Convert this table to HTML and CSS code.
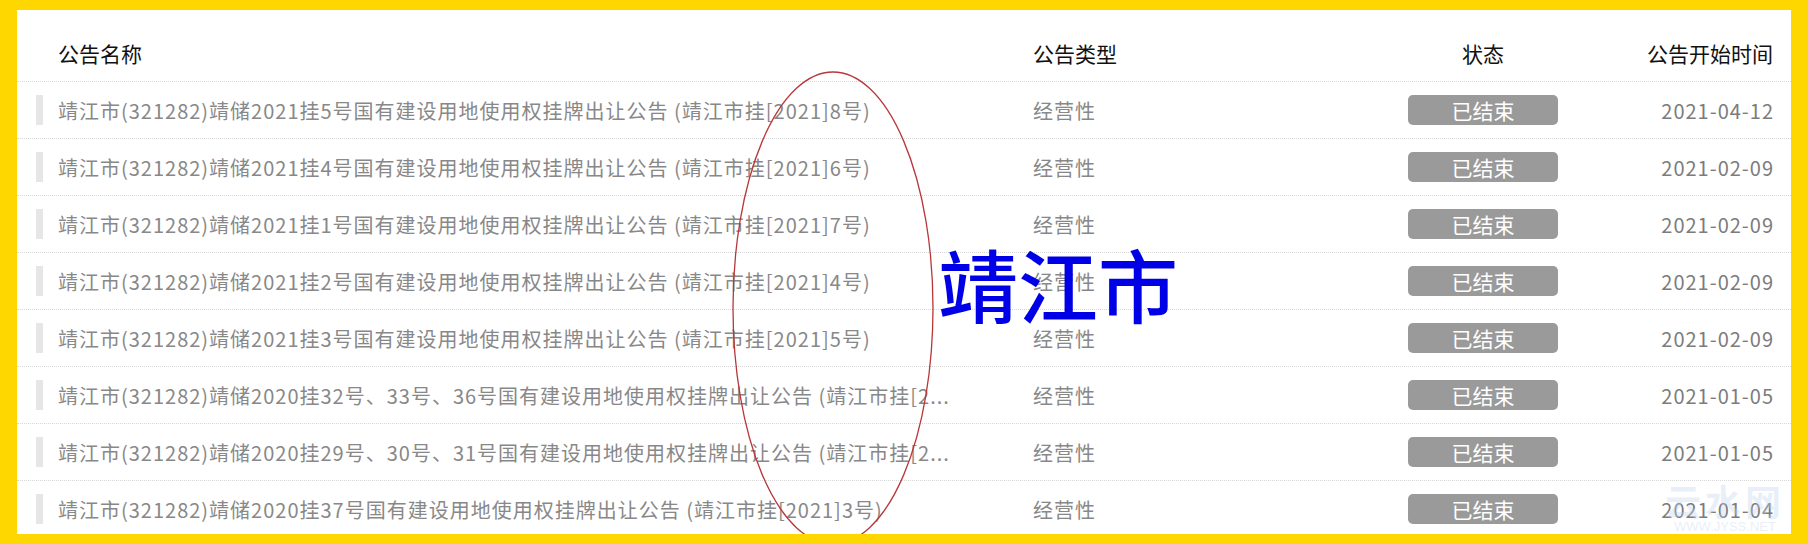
FILE: index.html
```html
<!DOCTYPE html>
<html lang="zh-CN">
<head>
<meta charset="UTF-8">
<meta name="viewport" content="width=device-width, initial-scale=1.0">
<title>靖江市 公告列表</title>
<link rel="stylesheet" href="styles.css">
</head>
<body>
<div class="panel">
  <div class="row head">
    <span></span>
    <span class="name">公告名称</span>
    <span class="type">公告类型</span>
    <span class="status">状态</span>
    <span class="date">公告开始时间</span>
  </div>
  <div class="row">
    <span class="bar"></span>
    <span class="name">靖江市(321282)靖储2021挂5号国有建设用地使用权挂牌出让公告 (靖江市挂[2021]8号)</span>
    <span class="type">经营性</span>
    <span class="status"><span class="badge">已结束</span></span>
    <span class="date">2021-04-12</span>
  </div>
  <div class="row">
    <span class="bar"></span>
    <span class="name">靖江市(321282)靖储2021挂4号国有建设用地使用权挂牌出让公告 (靖江市挂[2021]6号)</span>
    <span class="type">经营性</span>
    <span class="status"><span class="badge">已结束</span></span>
    <span class="date">2021-02-09</span>
  </div>
  <div class="row">
    <span class="bar"></span>
    <span class="name">靖江市(321282)靖储2021挂1号国有建设用地使用权挂牌出让公告 (靖江市挂[2021]7号)</span>
    <span class="type">经营性</span>
    <span class="status"><span class="badge">已结束</span></span>
    <span class="date">2021-02-09</span>
  </div>
  <div class="row">
    <span class="bar"></span>
    <span class="name">靖江市(321282)靖储2021挂2号国有建设用地使用权挂牌出让公告 (靖江市挂[2021]4号)</span>
    <span class="type">经营性</span>
    <span class="status"><span class="badge">已结束</span></span>
    <span class="date">2021-02-09</span>
  </div>
  <div class="row">
    <span class="bar"></span>
    <span class="name">靖江市(321282)靖储2021挂3号国有建设用地使用权挂牌出让公告 (靖江市挂[2021]5号)</span>
    <span class="type">经营性</span>
    <span class="status"><span class="badge">已结束</span></span>
    <span class="date">2021-02-09</span>
  </div>
  <div class="row">
    <span class="bar"></span>
    <span class="name">靖江市(321282)靖储2020挂32号、33号、36号国有建设用地使用权挂牌出让公告 (靖江市挂[2...</span>
    <span class="type">经营性</span>
    <span class="status"><span class="badge">已结束</span></span>
    <span class="date">2021-01-05</span>
  </div>
  <div class="row">
    <span class="bar"></span>
    <span class="name">靖江市(321282)靖储2020挂29号、30号、31号国有建设用地使用权挂牌出让公告 (靖江市挂[2...</span>
    <span class="type">经营性</span>
    <span class="status"><span class="badge">已结束</span></span>
    <span class="date">2021-01-05</span>
  </div>
  <div class="row">
    <span class="bar"></span>
    <span class="name">靖江市(321282)靖储2020挂37号国有建设用地使用权挂牌出让公告 (靖江市挂[2021]3号)</span>
    <span class="type">经营性</span>
    <span class="status"><span class="badge">已结束</span></span>
    <span class="date">2021-01-04</span>
  </div>

  <!-- annotations drawn over the list -->
  <svg class="circle" width="204" height="476" viewBox="0 0 204 476">
    <ellipse cx="102" cy="238" rx="100" ry="236" fill="none" stroke="#b8373a" stroke-width="1.3"/>
  </svg>
  <div class="city">靖江市</div>
  <div class="mark">
    <div class="mark-cn">云水网</div>
    <div class="mark-en">WWW.JYSS.NET</div>
  </div>
</div>
</body>
</html>
```

FILE: styles.css
```css
/* page */
body {
  margin: 0;
  background: #ffd700;
  font-family: "Microsoft YaHei", "Noto Sans CJK SC", sans-serif;
}

.panel {
  position: relative;
  margin: 10px 17px;
  height: 524px;
  background: #fff;
  overflow: hidden;
}

/* list rows */
.row {
  display: grid;
  grid-template-columns: 22px 975px 375px 150px 215px;
  align-items: center;
  padding: 0 18px 0 19px;
  height: 56px;
  border-bottom: 1px dotted #d6d6d6;
  font-size: 20px;
  letter-spacing: 1px;
  color: #888;
}

.bar {
  width: 7px;
  height: 30px;
  background: #e6e6e6;
}

.name {
  white-space: nowrap;
  overflow: hidden;
  padding-right: 40px;
}

.status {
  text-align: center;
}

.badge {
  display: block;
  height: 30px;
  line-height: 30px;
  border-radius: 5px;
  background: #9a9a9a;
  color: #fff;
  font-size: 21px;
  letter-spacing: 0;
}

.date {
  text-align: right;
  color: #7c7c7c;
  margin-right: -1px;
}

/* header row */
.row.head {
  height: 71px;
  align-items: start;
  font-size: 21px;
  letter-spacing: 0;
}

.row.head span {
  padding-top: 28px;
  line-height: 30px;
  color: #111;
}

.row.head .date {
  margin-right: 0;
}

/* overlays */
.circle {
  position: absolute;
  left: 714px;
  top: 60px;
}

.city {
  position: absolute;
  left: 921px;
  top: 232px;
  font-size: 80px;
  line-height: 80px;
  font-weight: 500;
  color: #0000e6;
}

.mark {
  position: absolute;
  left: 1648px;
  top: 470px;
  color: rgba(190, 210, 235, 0.35);
  text-align: center;
}

.mark-cn {
  font-size: 36px;
  line-height: 40px;
  font-weight: 700;
  letter-spacing: 4px;
}

.mark-en {
  font-family: "Liberation Sans", sans-serif;
  font-size: 13px;
  line-height: 14px;
}
```
